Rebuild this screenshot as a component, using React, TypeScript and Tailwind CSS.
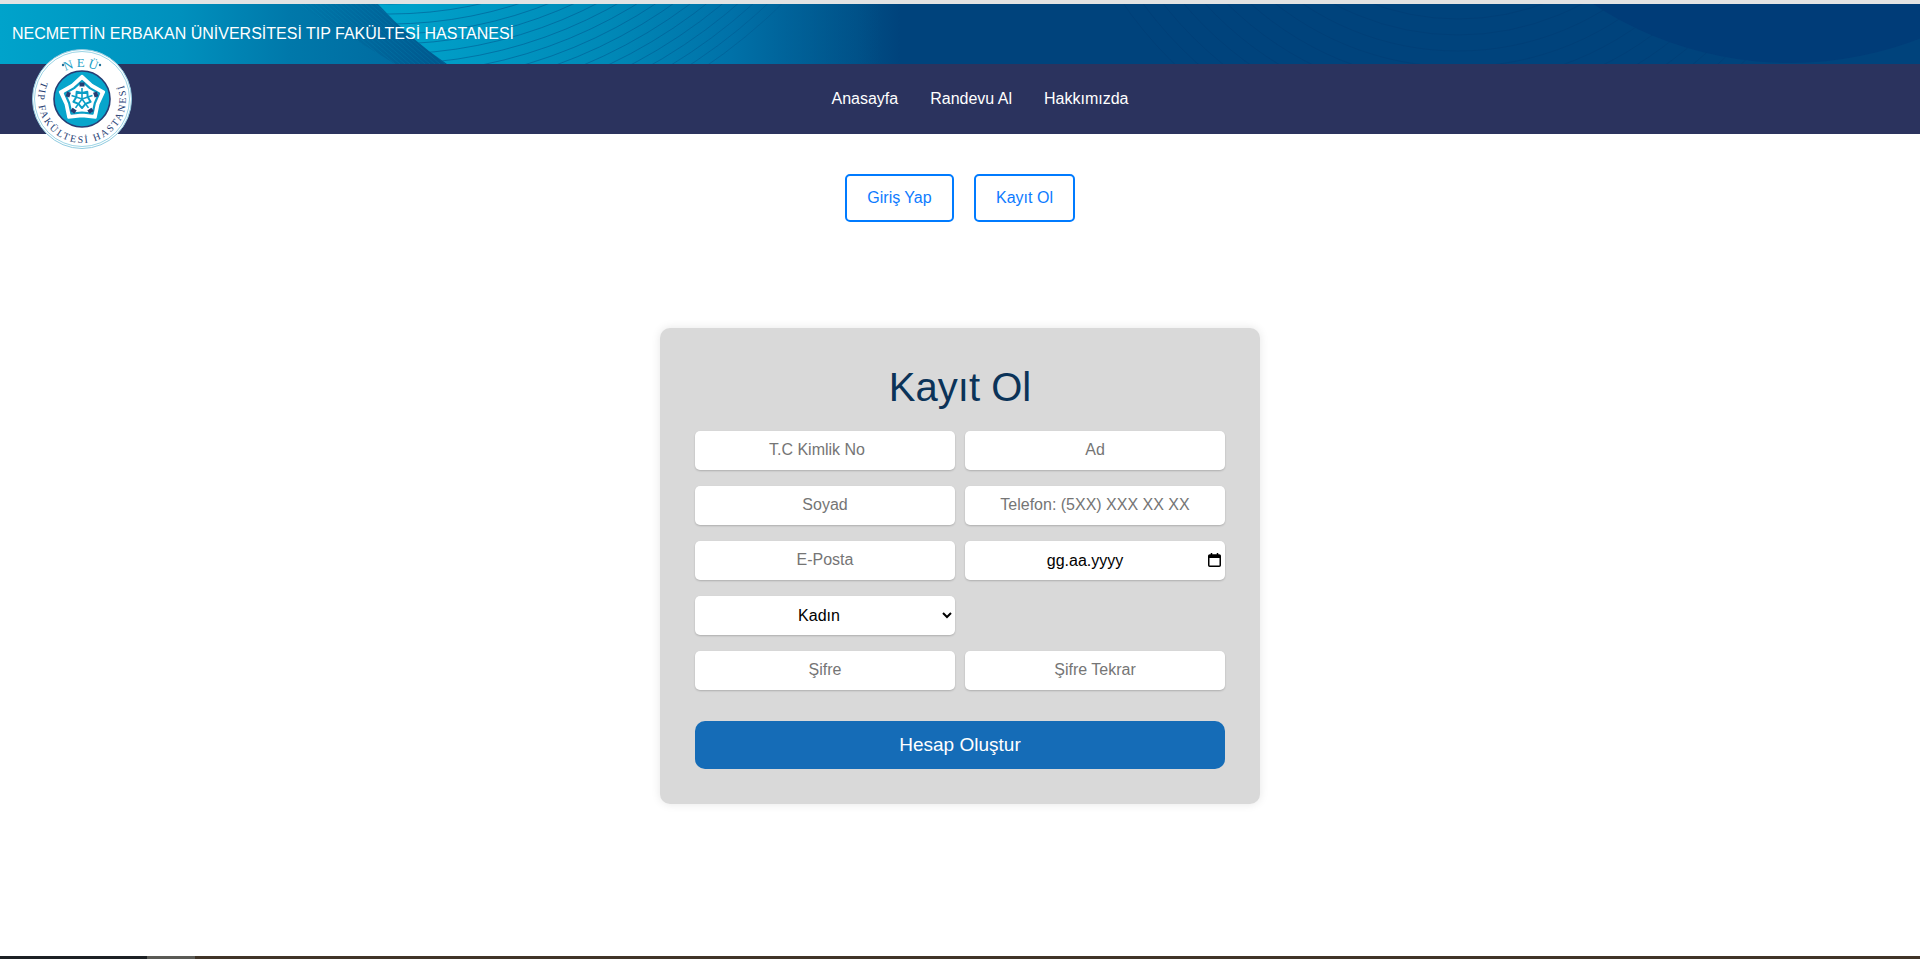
const LEFT_ARCS = Array.from({ length: 17 }, (_, i) => 400 + i * 10);
const RIGHT_ARCS = Array.from({ length: 11 }, (_, i) => 247 + i * 16);
const HATCH = Array.from({ length: 30 }, (_, i) => 290 + i * 5);

function BannerArt() {
  return (
    <svg className="absolute inset-0 h-full w-full" viewBox="0 0 1920 60" preserveAspectRatio="none" fill="none">
      <defs>
        <linearGradient id="wave" gradientUnits="userSpaceOnUse" x1="382" y1="0" x2="880" y2="0">
          <stop offset="0" stopColor="#00a4cc" />
          <stop offset="0.45" stopColor="#0089b7" />
          <stop offset="0.7" stopColor="#0071a8" />
          <stop offset="1" stopColor="#005890" stopOpacity="0" />
        </linearGradient>
        <linearGradient id="wedge" gradientUnits="userSpaceOnUse" x1="297" y1="0" x2="440" y2="30">
          <stop offset="0" stopColor="#006a9e" stopOpacity="0" />
          <stop offset="1" stopColor="#00598f" />
        </linearGradient>
        <clipPath id="wave-clip">
          <path d="M378 0 Q410 35 447 60 L880 60 L880 0 Z" />
        </clipPath>
        <clipPath id="wedge-clip">
          <path d="M297 0 L380 0 Q410 35 447 60 L395 60 Z" />
        </clipPath>
      </defs>
      <g clipPath="url(#wedge-clip)">
        <rect x="290" y="0" width="170" height="60" fill="url(#wedge)" />
        {HATCH.map((x) => (
          <path key={x} d={`M${x} 0 L${x + 70} 60`} stroke="#00a0c8" strokeOpacity="0.18" strokeWidth="1" />
        ))}
      </g>
      <g clipPath="url(#wave-clip)">
        <rect x="378" y="0" width="502" height="60" fill="url(#wave)" />
        {LEFT_ARCS.map((r) => (
          <circle key={r} cx="390" cy="-400" r={r} stroke="#005c92" strokeOpacity="0.6" strokeWidth="1" />
        ))}
      </g>
      {RIGHT_ARCS.map((r) => (
        <circle key={r} cx="1458" cy="-232" r={r} stroke="#003a70" strokeOpacity="0.4" strokeWidth="1" />
      ))}
      <circle cx="1790" cy="-299" r="358" fill="#003c78" />
    </svg>
  );
}

// 5 lobed rosette of the hospital seal
function rosette(outer: number, inner: number) {
  const pts: string[] = [];
  for (let i = 0; i < 10; i++) {
    const r = i % 2 === 0 ? outer : inner;
    const a = ((-90 + i * 36) * Math.PI) / 180;
    pts.push(`${(50 + r * Math.cos(a)).toFixed(1)},${(50 + r * Math.sin(a)).toFixed(1)}`);
  }
  return pts.join(" ");
}

const LOBES = [0, 72, 144, 216, 288];

function Logo() {
  return (
    <svg className="absolute left-[32px] top-[49px] z-10" width="100" height="100" viewBox="0 0 100 100">
      <defs>
        <path id="neu-top" d="M18 50 A32 32 0 0 1 82 50" />
        <path id="neu-bottom" d="M10.1 31.4 A44 44 0 1 0 89.9 31.4" />
      </defs>
      <circle cx="50" cy="50" r="49.5" fill="#fff" stroke="#8fcbe0" strokeWidth="1" />
      <circle cx="50" cy="50" r="47.5" fill="none" stroke="#35a9cb" strokeWidth="0.5" />
      <circle cx="50" cy="50" r="28" fill="#07a5cc" stroke="#263d73" strokeWidth="1.6" />
      <text fontFamily="'Liberation Serif', serif" fontSize="13" fill="#1aa0c6" letterSpacing="2.6">
        <textPath href="#neu-top" startOffset="50%" textAnchor="middle">
          NEÜ
        </textPath>
      </text>
      <circle cx="31" cy="16" r="1.2" fill="#1f6f97" />
      <circle cx="68" cy="16" r="1.2" fill="#1f6f97" />
      <text fontFamily="'Liberation Serif', serif" fontSize="10" fill="#263d73">
        <textPath href="#neu-bottom" startOffset="1" textLength="170" lengthAdjust="spacing">
          TIP FAKÜLTESİ HASTANESİ
        </textPath>
      </text>
      <polygon points={rosette(23, 17)} fill="#fff" stroke="#fff" strokeWidth="2.5" strokeLinejoin="round" />
      <polygon points={rosette(18, 13.5)} fill="none" stroke="#0a9ec6" strokeWidth="2.2" strokeLinejoin="round" />
      <polygon points={rosette(9, 6)} fill="none" stroke="#0a9ec6" strokeWidth="2" strokeLinejoin="round" transform="rotate(36 50 50)" />
      {LOBES.map((a) => (
        <g key={a} transform={`rotate(${a} 50 50)`}>
          <path d="M50 39 L50 50" stroke="#0a9ec6" strokeWidth="1.6" />
          <path d="M47.5 33.5 h5 v4 h-5 z" fill="#263d73" />
        </g>
      ))}
    </svg>
  );
}

const inputClass =
  "h-[39px] w-full rounded-[5px] bg-white px-2 pb-[1px] text-center text-[16px] text-black shadow-[0_1px_2px_rgba(0,0,0,0.2)] outline-none placeholder:text-[#757575]";

function Field({ placeholder, type = "text", className = "" }: { placeholder: string; type?: string; className?: string }) {
  return <input type={type} placeholder={placeholder} className={`${inputClass} ${className}`} />;
}

function DateField() {
  return (
    <div className="relative flex h-[39px] w-full items-center justify-center rounded-[5px] bg-white pr-[20px] text-[16px] text-black shadow-[0_1px_2px_rgba(0,0,0,0.2)]">
      gg.aa.yyyy
      <svg className="absolute right-[3px] top-[11px]" width="15" height="16" viewBox="0 0 15 16" fill="none">
        <rect x="1.75" y="3" width="11.5" height="11.25" rx="1" stroke="#000" strokeWidth="1.5" />
        <path d="M1.75 3h11.5v3H1.75z" fill="#000" />
        <path d="M4.5 1v2M10.5 1v2" stroke="#000" strokeWidth="1.5" />
      </svg>
    </div>
  );
}

export default function App() {
  return (
    <div className="flex min-h-[959px] flex-col bg-white font-['Liberation_Sans',Arial,sans-serif]">
      <div className="h-[4px] bg-[#e3e3e3]" />
      <header className="relative flex h-[60px] items-center overflow-hidden bg-[linear-gradient(90deg,#00a3cb_0px,#0090bd_180px,#0078aa_290px,#006ba0_400px,#006aa0_700px,#004f86_860px,#00437c_900px)] pl-[12px]">
        <BannerArt />
        <span className="relative text-[16px] text-white">
          NECMETTİN ERBAKAN ÜNİVERSİTESİ TIP FAKÜLTESİ HASTANESİ
        </span>
      </header>
      <Logo />
      <nav className="flex h-[70px] items-center justify-center gap-[32px] bg-[#2b335e] pl-[40px] text-[16px] text-white">
        <a>Anasayfa</a>
        <a>Randevu Al</a>
        <a>Hakkımızda</a>
      </nav>

      <main className="flex flex-col items-center">
        <div className="mt-[40px] flex gap-[20px] text-[16px] text-[#0d7bff]">
          <button className="h-[48px] w-[109px] rounded-[5px] border-2 border-[#007bff]">Giriş Yap</button>
          <button className="h-[48px] w-[101px] rounded-[5px] border-2 border-[#007bff]">Kayıt Ol</button>
        </div>

        <section className="mt-[106px] w-[600px] rounded-[10px] bg-[#d9d9d9] px-[35px] pb-[35px] pt-[36px] shadow-[0_0_10px_rgba(0,0,0,0.1)]">
          <h1 className="mb-[21px] text-center text-[40px] leading-[46px] text-[#0b3358]">Kayıt Ol</h1>
          <form className="grid grid-cols-2 gap-x-[10px] gap-y-[16px]">
            <Field placeholder="T.C Kimlik No" className="pr-[24px]" />
            <Field placeholder="Ad" />
            <Field placeholder="Soyad" />
            <Field placeholder="Telefon: (5XX) XXX XX XX" />
            <Field placeholder="E-Posta" type="email" />
            <DateField />
            <select className={inputClass}>
              <option>Kadın</option>
              <option>Erkek</option>
            </select>
            <div />
            <Field placeholder="Şifre" type="password" />
            <Field placeholder="Şifre Tekrar" type="password" />
            <button
              type="button"
              className="col-span-2 mt-[15px] h-[48px] rounded-[10px] bg-[#156cb7] text-[19px] text-white"
            >
              Hesap Oluştur
            </button>
          </form>
        </section>
      </main>

      <div className="mt-auto flex h-[3px]">
        <div className="w-[147px] bg-[#1c2024]" />
        <div className="w-[48px] bg-[#5a5a55]" />
        <div className="flex-1 bg-[#403428]" />
      </div>
    </div>
  );
}
